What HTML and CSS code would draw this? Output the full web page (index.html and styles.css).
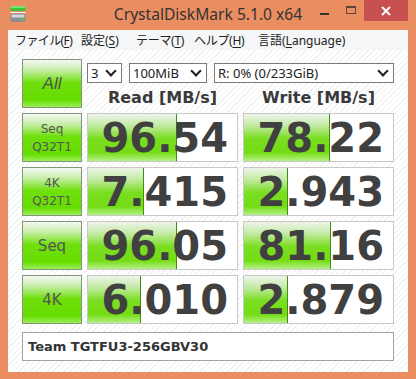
FILE: index.html
```html
<!DOCTYPE html>
<html lang="ja">
<head>
    <meta charset="UTF-8">
    <title>CrystalDiskMark 5.1.0 x64</title>
    <link rel="stylesheet" href="styles.css">
</head>
<body>
    <div class="window">
        <div class="titlebar">
            <div class="app-icon">
                <svg width="16" height="17" viewBox="0 0 16 17">
                    <rect x="0.5" y="0" width="15" height="5" rx="1" fill="#3cc43c"/>
                    <rect x="0.5" y="0" width="15" height="2" rx="1" fill="#7fe07f"/>
                    <rect x="0.5" y="6" width="15" height="1" fill="#ffffff"/>
                    <rect x="0.5" y="7.5" width="15" height="8.5" rx="2" fill="#8a8e94"/>
                    <rect x="1.5" y="8.5" width="13" height="3" rx="1" fill="#d4d7da"/>
                    <rect x="11" y="12.5" width="2.5" height="2" fill="#4ed04e"/>
                </svg>
            </div>
            <div class="title">CrystalDiskMark 5.1.0 x64</div>
            <div class="controls">
                <div class="ctl ctl-min"><span></span></div>
                <div class="ctl ctl-max"><span></span></div>
                <div class="ctl ctl-close">
                    <svg width="10" height="10" viewBox="0 0 10 10">
                        <path d="M1 1 L9 9 M9 1 L1 9" stroke="#fff" stroke-width="2"/>
                    </svg>
                </div>
            </div>
        </div>

        <div class="client">
            <div class="menubar">
                <span class="m-file">ファイル(<u>F</u>)</span>
                <span class="m-set">設定(<u>S</u>)</span>
                <span class="m-theme">テーマ(<u>T</u>)</span>
                <span class="m-help">ヘルプ(<u>H</u>)</span>
                <span>言語(<u>L</u>anguage)</span>
            </div>

            <div class="content">
                <div class="grid">
                    <div class="btn btn-all">All</div>
                    <div class="top">
                        <div class="selects">
                            <div class="select sel-count"><span>3</span><i></i></div>
                            <div class="select sel-size"><span>100MiB</span><i></i></div>
                            <div class="select sel-drive"><span>R: 0% (0/233GiB)</span><i></i></div>
                        </div>
                        <div class="heads">
                            <div>Read [MB/s]</div>
                            <div>Write [MB/s]</div>
                        </div>
                    </div>

                    <div class="btn">Seq<br>Q32T1</div>
                    <div class="cell"><div class="bar" style="width: 88px"></div><span>96.54</span></div>
                    <div class="cell"><div class="bar" style="width: 85px"></div><span>78.22</span></div>

                    <div class="btn">4K<br>Q32T1</div>
                    <div class="cell"><div class="bar" style="width: 55px"></div><span>7.415</span></div>
                    <div class="cell"><div class="bar" style="width: 43px"></div><span>2.943</span></div>

                    <div class="btn btn-big">Seq</div>
                    <div class="cell"><div class="bar" style="width: 88px"></div><span>96.05</span></div>
                    <div class="cell"><div class="bar" style="width: 86px"></div><span>81.16</span></div>

                    <div class="btn btn-big">4K</div>
                    <div class="cell"><div class="bar" style="width: 52px"></div><span>6.010</span></div>
                    <div class="cell"><div class="bar" style="width: 43px"></div><span>2.879</span></div>
                </div>

                <div class="comment">Team TGTFU3-256GBV30</div>
            </div>
        </div>
    </div>
</body>
</html>
```

FILE: styles.css
```css
body {
    margin: 0;
    font-family: "Noto Sans", "Noto Sans CJK JP", sans-serif;
    color: #333;
}
.window {
    width: 416px;
    height: 379px;
    background: #ea8d61;
    box-sizing: border-box;
    padding: 0 8px 7px 8px;
    display: flex;
    flex-direction: column;
}
.titlebar {
    height: 30px;
    display: grid;
    grid-template-columns: 1fr auto 1fr;
    align-items: start;
}
.app-icon {
    padding: 6px 0 0 2px;
    height: 17px;
}
.title {
    font-size: 15.6px;
    line-height: 30px;
    color: #333;
    margin-top: -1px;
}
.controls {
    display: flex;
    justify-content: flex-end;
}
.ctl {
    width: 26px;
    height: 21px;
    display: flex;
    align-items: center;
    justify-content: center;
}
.ctl-min span {
    width: 9px;
    height: 2px;
    background: #333;
    margin-top: 6px;
    margin-left: -2px;
}
.ctl-max span {
    width: 8px;
    height: 5px;
    border: 1px solid #5a4438;
    border-top-width: 2px;
    margin-top: -2px;
}
.ctl-close {
    width: 44px;
    background: #c75050;
}
.client {
    flex: 1;
    background: #fff;
    display: flex;
    flex-direction: column;
}
.menubar {
    height: 20px;
    background: #f5f6f7;
    display: flex;
    align-items: center;
    padding-left: 7px;
    font-size: 12px;
    color: #222;
    white-space: nowrap;
}
.m-file { width: 66px; letter-spacing: -0.6px; }
.m-set { width: 55px; }
.m-theme { width: 58px; letter-spacing: -0.3px; }
.m-help { width: 64px; letter-spacing: -0.3px; }
.menubar u {
    text-decoration-thickness: 1px;
    text-underline-offset: 2px;
}
.content {
    flex: 1;
    padding: 9px 14px 0 14px;
    background: repeating-linear-gradient(-45deg, #ffffff 0 3px, #f1f1f1 3px 4px);
}
.grid {
    display: grid;
    grid-template-columns: 60px 151px 151px;
    grid-template-rows: repeat(5, 49px);
    gap: 5px;
}
.btn {
    box-sizing: border-box;
    border: 1px solid #7f987d;
    background: linear-gradient(to bottom, #f6f8f4 0%, #c6eea6 22%, #6fe00c 48%, #66dd00 85%, #9bee5a 100%);
    display: flex;
    align-items: center;
    justify-content: center;
    text-align: center;
    font-size: 12px;
    line-height: 18px;
    color: #555;
    font-family: "DejaVu Sans", sans-serif;
}
.btn-all {
    font-size: 17px;
    font-style: italic;
    font-family: "Liberation Sans", sans-serif;
    color: #505050;
}
.btn-big {
    font-size: 15px;
}
.top {
    grid-column: 2 / 4;
    display: flex;
    flex-direction: column;
}
.selects {
    display: flex;
    gap: 7px;
    margin-top: 4px;
}
.select {
    box-sizing: border-box;
    height: 20px;
    border: 1px solid #7a7a7a;
    background: #fff;
    display: flex;
    align-items: center;
    justify-content: space-between;
    padding: 0 4px 0 3px;
    font-size: 13px;
    color: #222;
}
.select i {
    width: 6px;
    height: 6px;
    border-right: 2px solid #222;
    border-bottom: 2px solid #222;
    transform: rotate(45deg);
    margin: -4px 2px 0 0;
}
.sel-count { width: 35px; }
.sel-size { width: 78px; }
.sel-drive { width: 180px; }
.heads {
    display: grid;
    grid-template-columns: 151px 151px;
    gap: 5px;
    margin-top: 6px;
    font-family: "DejaVu Sans", sans-serif;
    font-weight: bold;
    font-size: 16px;
    line-height: 18px;
    text-align: center;
    color: #3a3a3a;
}
.cell {
    position: relative;
    box-sizing: border-box;
    border: 1px solid #c8c8c8;
    background: #fff;
    display: flex;
    align-items: center;
    justify-content: flex-end;
    padding-right: 9px;
    font-family: "DejaVu Sans", sans-serif;
    font-weight: bold;
    font-size: 40px;
    color: #404040;
}
.bar {
    position: absolute;
    left: 0;
    top: 0;
    bottom: 0;
    background: linear-gradient(to bottom, #eef4ea 0%, #c2eaa2 25%, #7ade22 52%, #74dc14 82%, #b4f286 100%);
    border-right: 1px solid #3f8f10;
}
.cell span {
    position: relative;
    margin-top: 1px;
}
.comment {
    box-sizing: border-box;
    margin-top: 8px;
    width: 372px;
    height: 29px;
    border: 1px solid #a4a4a4;
    background: #fff;
    display: flex;
    align-items: center;
    padding-left: 5px;
    font-family: "DejaVu Sans", sans-serif;
    font-weight: bold;
    font-size: 13px;
    color: #333;
}
```
